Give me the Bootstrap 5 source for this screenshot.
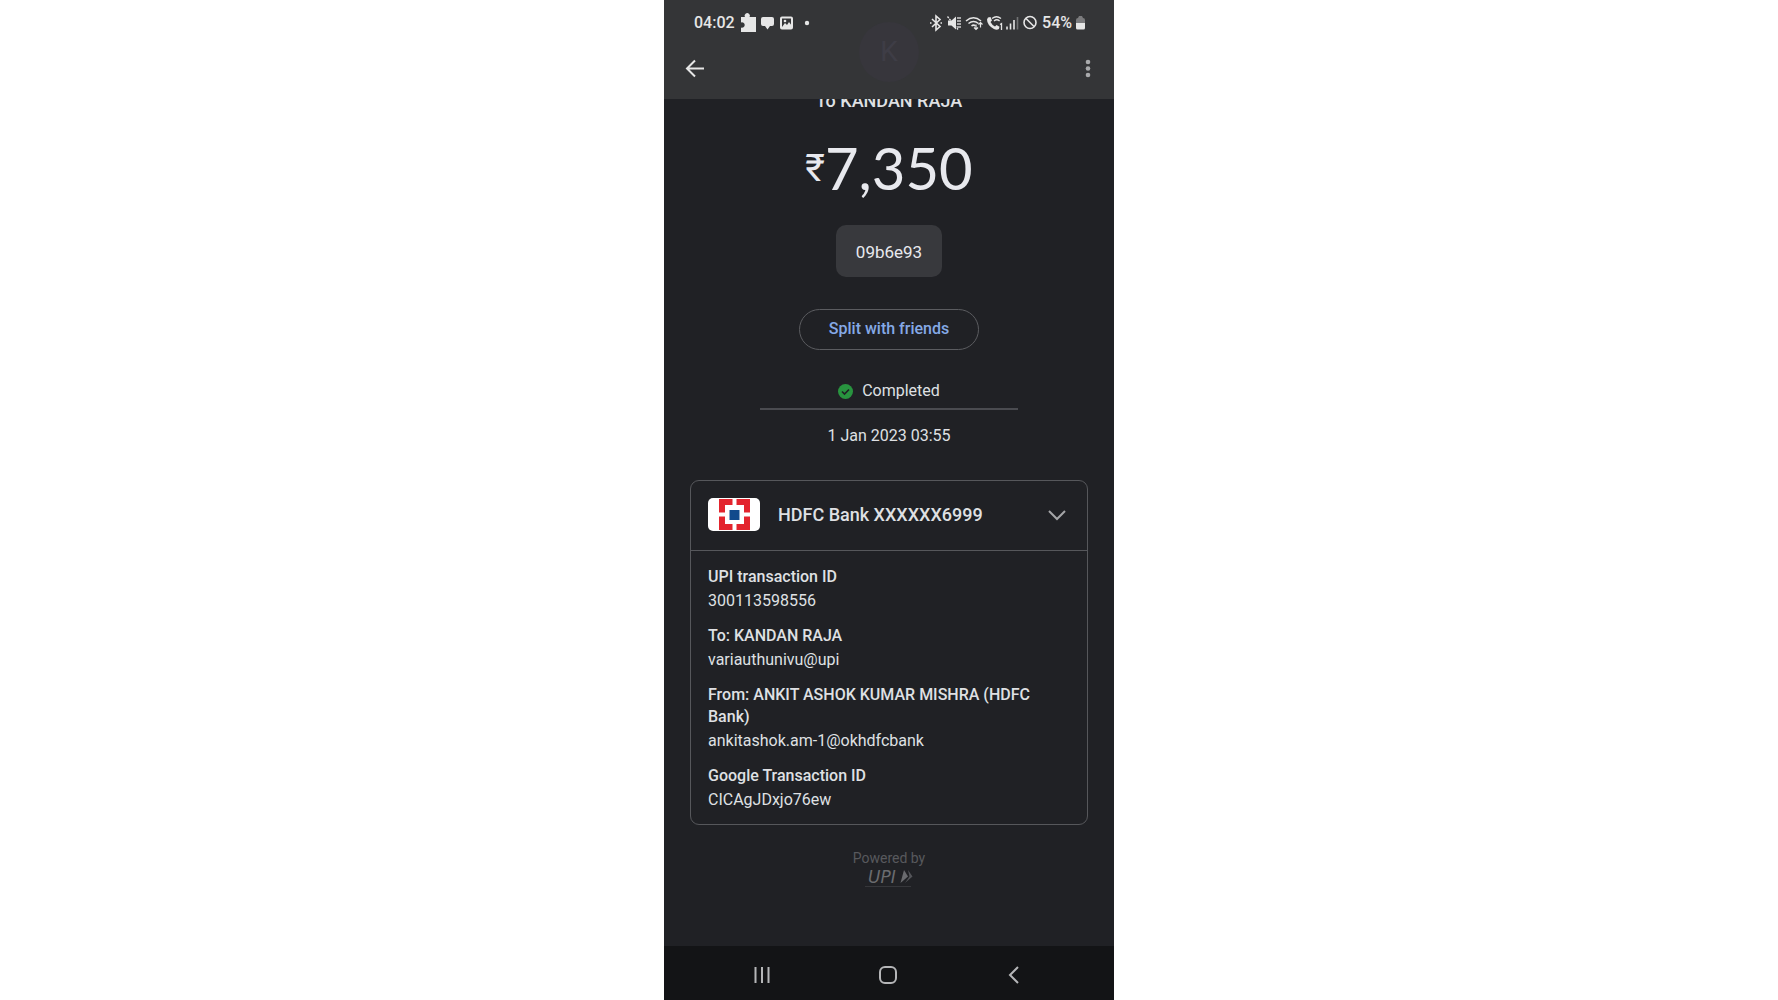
<!DOCTYPE html>
<html lang="en">
<head>
<meta charset="utf-8">
<meta name="viewport" content="width=device-width, initial-scale=1">
<title>Transaction details</title>
<link href="https://cdn.jsdelivr.net/npm/bootstrap@5.3.0/dist/css/bootstrap.min.css" rel="stylesheet">
<style>
body { background: #fff; font-family: Roboto, "Noto Sans", sans-serif; font-size: 16px; line-height: 24px; }
svg { display: block; flex: none; }
.phone { max-width: 450px; background: #202125; color: #dfe0e3; }
.topbar { background: #343537; z-index: 2; color: #e6e6e6; height: 99px; }
.statusbar { height: 44px; padding: 2px 29px 0 30px; font-weight: 500; }
.appbar { height: 50px; padding: 0 20px; }
.ghost-avatar { width: 60px; height: 60px; top: 22px; left: 50%; margin-left: -30px; background: #37363c; color: #3e3d46; font-size: 28px; }
.plain-btn { background: none; border: 0; padding: 0; color: inherit; }
.receipt { margin-top: -10px; padding: 0 26px; }
.payee { font-size: 18px; font-weight: 500; }
.amount { font-family: Lato, "Open Sans", sans-serif; font-size: 58px; line-height: 64px; margin-top: 23px; color: #e8e9ee; }
.amount-sign { font-size: 38px; line-height: 40px; font-family: Roboto, sans-serif; margin-top: 12px; }
.note { background: #38393d; border-radius: 10px; padding: 15px 20px 13px; margin-top: 25px; font-size: 17px; color: #e8e9ee; }
.split-btn { --bs-btn-color: #85a9e6; --bs-btn-border-color: #5b5c60; --bs-btn-hover-color: #a9c8fb; --bs-btn-hover-border-color: #8ab4f8; width: 180px; height: 41px; margin-top: 32px; padding: 0 0 2px; font-size: 16px; font-weight: 500; }
.state { width: 258px; margin-top: 29px; padding-bottom: 5px; border-bottom: 2px solid #4a4b50; gap: 9px; }
.stamp { margin-top: 14px; }
.bank { width: 100%; margin-top: 32px; border: 1px solid #56575b; border-radius: 9px; }
.bank-head { padding: 0 20px 2px 17px; height: 69px; }
.bank-name { font-size: 18px; font-weight: 500; margin-left: 18px; }
.bank-body { border-top: 1px solid #56575b; padding: 15px 40px 11px 17px; }
.bank-body dl { gap: 11px; }
.bank-body dt { line-height: 22px; font-size: 16px; font-weight: 500; }
.bank-body dd { line-height: 26px; }
.powered { margin-top: 25px; font-size: 14px; line-height: 16px; color: #58595d; }
.navkeys { background: #131416; height: 54px; color: #b5b6b8; padding: 3px 90px 0 89px; }
</style>
</head>
<body>
<div class="phone min-vh-100 mx-auto d-flex flex-column">
  <header class="topbar position-relative">
    <div class="ghost-avatar position-absolute rounded-circle d-flex align-items-center justify-content-center" aria-hidden="true">K</div>
    <div class="statusbar position-relative d-flex align-items-center justify-content-between">
      <div class="d-flex align-items-center">
        <span>04:02</span>
        <svg class="ms-1" width="64" height="20" viewBox="0 0 64 20" fill="currentColor" aria-hidden="true">
          <path d="M2 4h4a2.600 2.600 0 1 1 4.500 0H17v15H2v-4.500a2.700 2.700 0 1 0 0-5z"/>
          <path d="M24 4h9a2 2 0 0 1 2 2v5a2 2 0 0 1-2 2h-2l-2.500 3.500L26 13h-2a2 2 0 0 1-2-2V6a2 2 0 0 1 2-2z"/>
          <rect x="42" y="4.500" width="11" height="11" rx="1" fill="none" stroke="currentColor" stroke-width="2"/><path d="M43 14l3-4 2 2 2-3 3 4v2H43z"/><circle cx="46" cy="8" r="1.300"/>
        </svg>
        <svg width="8" height="8" viewBox="0 0 8 8" fill="currentColor" aria-hidden="true"><circle cx="4" cy="4" r="2.200"/></svg>
      </div>
      <div class="d-flex align-items-center">
        <svg width="110" height="18" viewBox="0 0 110 18" fill="none" stroke="currentColor" stroke-width="1.600" aria-hidden="true">
          <path d="M4 5l8 7.500-4 3.500V2l4 3.500L4 13M2 9h1.500M12.500 9H14"/>
          <path d="M20 6.500h3.500L28 2.500v13l-4.500-4H20z" fill="currentColor" stroke="none"/><path d="M19.500 2.500l10.500 13M30 3v12M32 3v12" stroke-width="1.300" stroke-dasharray="2 1"/>
          <path d="M38 7q7.500-6.500 15 0M40.500 9.500q5-4 10 0M43.500 12q2-1.700 4 0" stroke-width="1.500"/><path d="M48 10.500v5m-2-2 2 2 2-2M52.500 13.500V8.500m-2 2 2-2 2 2" stroke-width="1.200"/>
          <path d="M60 3.500l2.500-.5L64 6.500 62.500 8q1.500 3 4.500 4.500l1.500-1.500 3 1.700-.6 2.300q-2 1.500-5 0Q59 11 59 5.500z" fill="currentColor" stroke="none"/><path d="M64 4.500q4.500-3.500 9 0M66 7q2.800-2.500 5.600 0M72 10.500l1.500-.8V16" stroke-width="1.300"/>
          <path d="M79 15.500v-3M82.500 15.500v-6M86 15.500V6" stroke-width="1.600"/><path d="M89.500 15.500V3" stroke-width="1.600" opacity=".35"/>
          <circle cx="102" cy="8.500" r="6"/><path d="M98 4.500l8 8"/>
        </svg>
        <span class="ms-1">54%</span>
        <svg class="ms-1" width="9" height="14" viewBox="0 0 9 14" fill="currentColor" aria-hidden="true"><path d="M0 4q0-2 2-2l1-2h3l1 2q2 0 2 2v3H0z" opacity=".4"/><path d="M0 7h9v5q0 1.500-1.500 1.500h-6Q0 13.500 0 12z"/></svg>
      </div>
    </div>
    <div class="appbar position-relative d-flex align-items-center justify-content-between">
      <button class="plain-btn" type="button" aria-label="Back"><svg width="22" height="22" viewBox="0 0 22 22" fill="none" stroke="currentColor" stroke-width="2"><path d="M20 10.500H3M11 2.500l-8 8 8 8"/></svg></button>
      <button class="plain-btn" type="button" aria-label="More options"><svg width="12" height="22" viewBox="0 0 12 22" fill="#a9aaac"><circle cx="6" cy="4" r="2.300"/><circle cx="6" cy="10.500" r="2.300"/><circle cx="6" cy="17" r="2.300"/></svg></button>
    </div>
  </header>

  <main class="receipt flex-grow-1 d-flex flex-column align-items-center">
    <div class="payee">To KANDAN RAJA</div>
    <div class="amount d-flex align-items-start"><span class="amount-sign">₹</span><span>7,350</span></div>
    <div class="note">09b6e93</div>
    <button class="split-btn btn rounded-pill" type="button">Split with friends</button>
    <div class="state d-flex align-items-center justify-content-center">
      <svg width="15" height="15" viewBox="0 0 15 15" aria-hidden="true"><circle cx="7.500" cy="7.500" r="7.500" fill="#28943f"/><path d="M4 7.500l2.500 2.500L11 5.500" fill="none" stroke="#202125" stroke-width="1.700"/></svg>
      <span>Completed</span>
    </div>
    <div class="stamp">1 Jan 2023 03:55</div>

    <section class="bank">
      <button class="bank-head plain-btn w-100 d-flex align-items-center text-start" type="button" data-bs-toggle="collapse" data-bs-target="#bankDetails" aria-expanded="true" aria-controls="bankDetails">
        <svg width="52" height="33" viewBox="0 0 52 33" aria-hidden="true"><rect width="52" height="33" rx="5" fill="#fff"/><path d="M11 1h31v31H11z" fill="#e3242d"/><path d="M24.500 0h4v33h-4zM11 14.500h31v4H11z" fill="#fff"/><path d="M17 7h19v19H17z" fill="#fff"/><path d="M21.500 12h10v10h-10z" fill="#124a8c"/></svg>
        <span class="bank-name flex-grow-1">HDFC Bank XXXXXX6999</span>
        <svg width="20" height="14" viewBox="0 0 20 14" fill="none" stroke="#a5a6a8" stroke-width="2" aria-hidden="true"><path d="M2 3l8 8 8-8"/></svg>
      </button>
      <div class="collapse show" id="bankDetails">
        <div class="bank-body">
          <dl class="d-flex flex-column mb-0">
            <div><dt>UPI transaction ID</dt><dd class="mb-0">300113598556</dd></div>
            <div><dt>To: KANDAN RAJA</dt><dd class="mb-0">variauthunivu@upi</dd></div>
            <div><dt>From: ANKIT ASHOK KUMAR MISHRA (HDFC Bank)</dt><dd class="mb-0">ankitashok.am-1@okhdfcbank</dd></div>
            <div><dt>Google Transaction ID</dt><dd class="mb-0">CICAgJDxjo76ew</dd></div>
          </dl>
        </div>
      </div>
    </section>

    <div class="powered d-flex flex-column align-items-center">
      <span>Powered by</span>
      <svg width="56" height="26" viewBox="0 0 56 26" fill="#6a6b6f" role="img" aria-label="UPI"><text x="7" y="17" font-family="DejaVu Sans, sans-serif" font-size="17" font-style="italic">UPI</text><path d="M43 4l4 6.500-7.500 6.500z"/><path d="M47 4l4.500 6.500L44 17l4.500-6.500z" opacity=".7"/><path d="M4 20.500h46" stroke="#36373b"/></svg>
    </div>
  </main>

  <nav class="navkeys d-flex align-items-center justify-content-between" aria-label="System">
    <button class="plain-btn" type="button" aria-label="Recent apps"><svg width="18" height="18" viewBox="0 0 18 18" fill="none" stroke="currentColor" stroke-width="2"><path d="M2.500 1v16M9 1v16M15.500 1v16"/></svg></button>
    <button class="plain-btn" type="button" aria-label="Home"><svg width="20" height="20" viewBox="0 0 20 20" fill="none" stroke="currentColor" stroke-width="2"><rect x="2" y="2" width="16" height="16" rx="5"/></svg></button>
    <button class="plain-btn" type="button" aria-label="Go back"><svg width="20" height="20" viewBox="0 0 20 20" fill="none" stroke="currentColor" stroke-width="2"><path d="M14 2L6 10l8 8"/></svg></button>
  </nav>
</div>
<script src="https://cdn.jsdelivr.net/npm/bootstrap@5.3.0/dist/js/bootstrap.bundle.min.js"></script>
</body>
</html>
